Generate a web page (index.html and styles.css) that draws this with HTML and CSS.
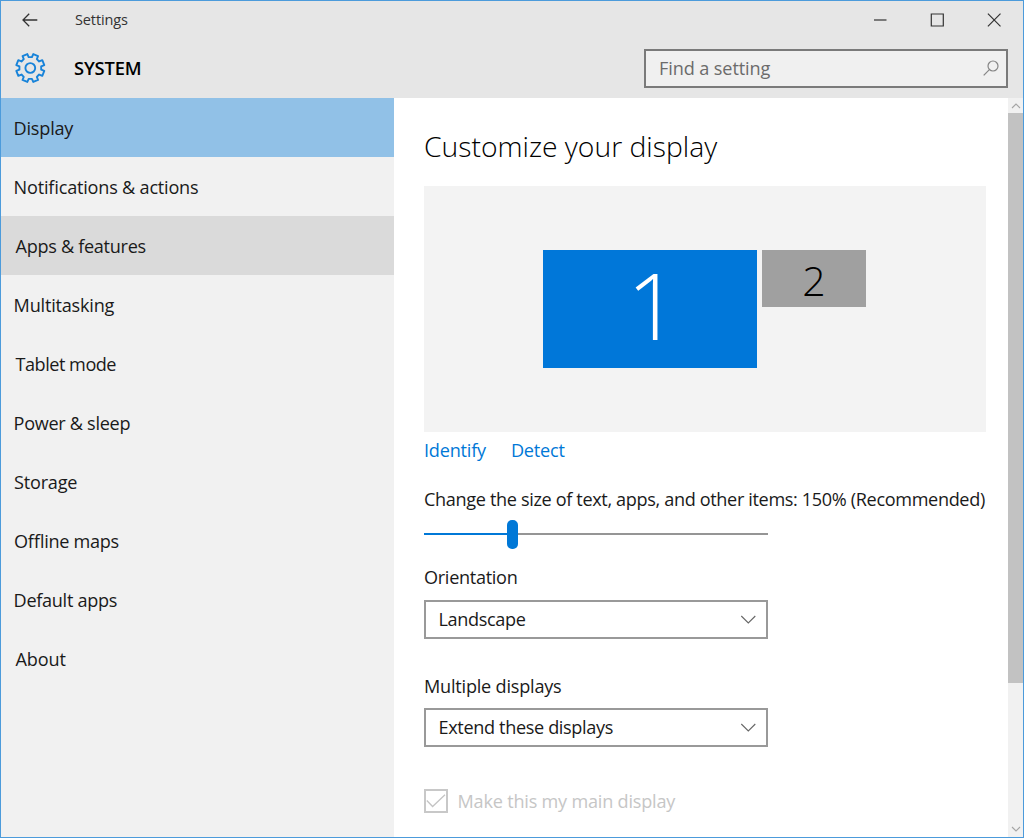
FILE: index.html
```html
<!DOCTYPE html>
<html lang="en">
<head>
<meta charset="utf-8">
<title>Settings</title>
<link rel="stylesheet" href="styles.css">
</head>
<body>
<div class="window">
  <header class="header">
    <div class="titlebar">
      <svg class="back" width="16" height="14" viewBox="0 0 16 14"><path d="M15.3 7H1M7.2 .8 1 7l6.2 6.2"/></svg>
      <span class="app-name">Settings</span>
      <div class="controls">
        <svg width="14" height="14" viewBox="0 0 14 14"><path d="M1 7h12.5"/></svg>
        <svg width="14" height="14" viewBox="0 0 14 14"><path d="M1.3 1h12v12h-12z"/></svg>
        <svg width="14" height="14" viewBox="0 0 14 14"><path d="M.9.7l12.6 12.6M13.5.7.9 13.3"/></svg>
      </div>
    </div>
    <div class="section-bar">
      <svg class="gear" width="32" height="32" viewBox="-16.3 -16 32 32"><path id="teeth" d="M0 0"/><circle r="4.9"/></svg>
      <h1 class="section-name">SYSTEM</h1>
      <div class="search">
        <span class="search-hint t1">Find a setting</span>
        <svg width="16" height="16" viewBox="0 0 16 16"><circle cx="10" cy="6" r="5"/><path d="M6.4 9.6.7 15.3"/></svg>
      </div>
    </div>
  </header>
  <div class="body">
    <nav class="nav">
      <a class="item selected t2">Display</a>
      <a class="item t2">Notifications &amp; actions</a>
      <a class="item hover flush t3">Apps &amp; features</a>
      <a class="item t2">Multitasking</a>
      <a class="item flush t5">Tablet mode</a>
      <a class="item t3">Power &amp; sleep</a>
      <a class="item round t2">Storage</a>
      <a class="item round t3">Offline maps</a>
      <a class="item t3">Default apps</a>
      <a class="item flush t1">About</a>
    </nav>
    <main class="content">
      <h2 class="title">Customize your display</h2>
      <div class="arrangement">
        <div class="monitor primary"><span>1</span></div>
        <div class="monitor secondary"><span>2</span></div>
      </div>
      <div class="links"><a class="t2">Identify</a><a class="t2">Detect</a></div>
      <div class="label scale-label t4">Change the size of text, apps, and other items: 150% (Recommended)</div>
      <div class="slider"><i class="fill"></i><i class="thumb"></i><i class="rest"></i></div>
      <div class="label orientation t3">Orientation</div>
      <div class="select first"><span class="t4">Landscape</span><svg width="16" height="9" viewBox="0 0 16 9"><path d="M1.3 1l7 7 7-7"/></svg></div>
      <div class="label multiple t2">Multiple displays</div>
      <div class="select"><span class="t4">Extend these displays</span><svg width="16" height="9" viewBox="0 0 16 9"><path d="M1.3 1l7 7 7-7"/></svg></div>
      <div class="check"><span class="box"><svg width="20" height="14" viewBox="0 0 20 14"><path d="M.8 6.5l5.8 6L19 .8"/></svg></span><span class="t2">Make this my main display</span></div>
    </main>
    <div class="scrollbar">
      <svg width="10" height="6" viewBox="0 0 10 6"><path d="M1 5l4-4 4 4"/></svg>
      <i class="scroll-thumb"></i>
      <svg class="down" width="10" height="6" viewBox="0 0 10 6"><path d="M1 1l4 4 4-4"/></svg>
    </div>
  </div>
</div>
<script src="gear.js"></script>
</body>
</html>
```

FILE: styles.css
```css
* { box-sizing: border-box; }
body { margin: 0; font: 18.1px/26px "Open Sans", "Noto Sans", sans-serif; color: #1a1a1a; font-feature-settings: "liga" 1; }
h1, h2 { margin: 0; }
svg { fill: none; flex: none; display: block; }
i { display: block; }
.t1 { letter-spacing: -.1px; }
.t2 { letter-spacing: -.21px; }
.t3 { letter-spacing: -.3px; }
.t4 { letter-spacing: -.35px; }
.t5 { letter-spacing: -.48px; }

.window { width: 1024px; height: 838px; border: 1px solid #4c9bdb; background: #fff; display: flex; flex-direction: column; overflow: hidden; }
.header { height: 97px; background: #e6e6e6; flex: none; }
.titlebar { height: 38px; display: flex; align-items: center; padding: 0 22px 0 21px; }
.back { stroke: #333; stroke-width: 1.3; }
.app-name { font-size: 14.5px; margin-left: 37px; letter-spacing: -.12px; color: #333; }
.controls { margin-left: auto; display: flex; gap: 43px; stroke: #333; stroke-width: 1.2; }
.section-bar { height: 59px; display: flex; align-items: center; padding: 0 15px 1px 13px; }
.gear { stroke: #1883d9; stroke-width: 1.9; stroke-linejoin: round; }
.section-name { font-size: 18.3px; font-weight: 600; line-height: 26px; margin-left: 28px; color: #000; letter-spacing: -.15px; }
.search { margin-left: auto; width: 364px; height: 39px; border: 2px solid #7a7a7a; background: #f0f0f0; display: flex; align-items: center; justify-content: space-between; padding: 0 7px 1px 13px; color: #6b6b6b; }
.search svg { stroke: #858585; stroke-width: 1.2; }

.body { flex: 1; display: flex; min-height: 0; }
.nav { width: 393px; flex: none; background: #f1f1f1; }
.item { display: flex; align-items: center; height: 59px; padding-left: 12.6px; padding-top: 1px; }
.item.flush { padding-left: 14.5px; }
.item.round { padding-left: 13px; }
.selected { background: #91c1e7; }
.hover { background: #dadada; }

.content { flex: 1; padding: 28px 0 0 30px; min-width: 0; overflow: hidden; white-space: nowrap; }
.title { font-size: 28.3px; font-weight: 300; line-height: 40px; color: #000; }
.arrangement { margin-top: 20px; width: 562px; height: 246px; background: #f3f3f3; display: flex; align-items: flex-start; gap: 5px; padding: 64px 0 0 119px; }
.monitor { display: flex; justify-content: center; align-items: center; font-weight: 300; }
.primary { width: 214px; height: 118px; background: #0077d9; color: #fff; font-size: 92px; line-height: 92px; padding: 0 0 8px 6px; }
.secondary { width: 104px; height: 57px; background: #a0a0a0; color: #000; font-size: 41px; line-height: 42px; padding-top: 3px; }
.links { margin-top: 5px; display: flex; gap: 25px; color: #0078d7; }
.scale-label { margin-top: 23px; }
.slider { margin-top: 8px; width: 344px; height: 29px; display: flex; align-items: center; }
.fill, .rest { height: 2px; margin-bottom: 1px; }
.fill { width: 83px; background: #0078d7; }
.thumb { width: 11px; height: 29px; border-radius: 5px; background: #0078d7; }
.rest { flex: 1; background: #959595; }
.orientation { margin-top: 15px; }
.select { width: 344px; height: 39px; margin-top: 9px; border: 2px solid #999; display: flex; align-items: center; justify-content: space-between; padding: 0 10px 1px 12.5px; }
.select.first { margin-top: 10px; }
.select svg { stroke: #666; stroke-width: 1.1; }
.multiple { margin-top: 34px; }
.check { margin-top: 42px; display: flex; align-items: center; gap: 9.5px; height: 24px; color: #c6c6c6; }
.box { width: 24px; height: 24px; border: 2px solid #c8c8c8; display: flex; align-items: center; justify-content: center; }
.box svg { stroke: #c4c4c4; stroke-width: 1.3; }

.scrollbar { width: 15px; flex: none; background: #f1f1f1; display: flex; flex-direction: column; align-items: center; padding: 5px 0; }
.scrollbar svg { stroke: #a5a5a5; stroke-width: 1.1; }
.scroll-thumb { width: 15px; height: 570px; margin-top: 4px; background: #c2c2c2; }
.scrollbar .down { margin-top: auto; }
```

FILE: gear.js
```js
// Eight-toothed gear outline with flat teeth and shallow valleys
const pts = [];
for (let k = 0; k < 8; k++) {
  const base = k * 45 + 22.5;
  for (const [offset, radius] of [[-10.5, 14.3], [10.5, 14.3], [14, 11], [31, 11]]) {
    const a = (base + offset) * Math.PI / 180;
    pts.push((radius * Math.cos(a)).toFixed(2) + " " + (radius * Math.sin(a)).toFixed(2));
  }
}
document.getElementById("teeth").setAttribute("d", "M" + pts.join("L") + "Z");
```
